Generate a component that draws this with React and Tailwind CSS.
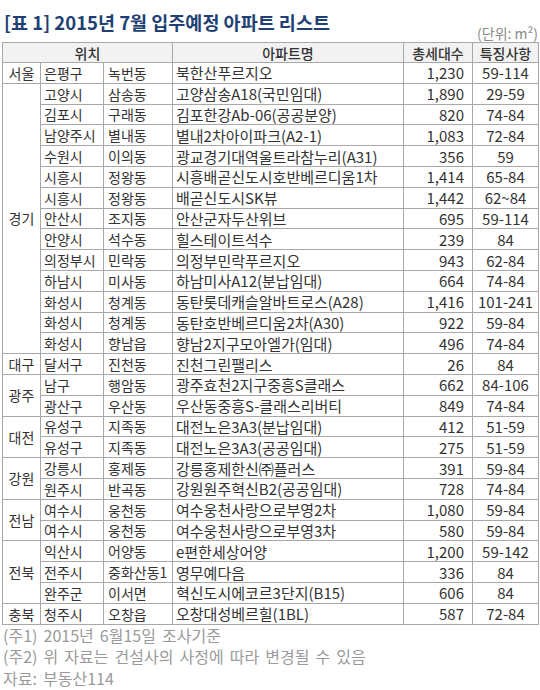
const groups = [
  { region: "서울", rows: [["은평구", "녹번동", "북한산푸르지오", "1,230", "59-114"]] },
  {
    region: "경기",
    rows: [
      ["고양시", "삼송동", "고양삼송A18(국민임대)", "1,890", "29-59"],
      ["김포시", "구래동", "김포한강Ab-06(공공분양)", "820", "74-84"],
      ["남양주시", "별내동", "별내2차아이파크(A2-1)", "1,083", "72-84"],
      ["수원시", "이의동", "광교경기대역울트라참누리(A31)", "356", "59"],
      ["시흥시", "정왕동", "시흥배곧신도시호반베르디움1차", "1,414", "65-84"],
      ["시흥시", "정왕동", "배곧신도시SK뷰", "1,442", "62~84"],
      ["안산시", "조지동", "안산군자두산위브", "695", "59-114"],
      ["안양시", "석수동", "힐스테이트석수", "239", "84"],
      ["의정부시", "민락동", "의정부민락푸르지오", "943", "62-84"],
      ["하남시", "미사동", "하남미사A12(분납임대)", "664", "74-84"],
      ["화성시", "청계동", "동탄롯데캐슬알바트로스(A28)", "1,416", "101-241"],
      ["화성시", "청계동", "동탄호반베르디움2차(A30)", "922", "59-84"],
      ["화성시", "향남읍", "향남2지구모아엘가(임대)", "496", "74-84"],
    ],
  },
  { region: "대구", rows: [["달서구", "진천동", "진천그린팰리스", "26", "84"]] },
  {
    region: "광주",
    rows: [
      ["남구", "행암동", "광주효천2지구중흥S클래스", "662", "84-106"],
      ["광산구", "우산동", "우산동중흥S-클래스리버티", "849", "74-84"],
    ],
  },
  {
    region: "대전",
    rows: [
      ["유성구", "지족동", "대전노은3A3(분납임대)", "412", "51-59"],
      ["유성구", "지족동", "대전노은3A3(공공임대)", "275", "51-59"],
    ],
  },
  {
    region: "강원",
    rows: [
      ["강릉시", "홍제동", "강릉홍제한신㈜플러스", "391", "59-84"],
      ["원주시", "반곡동", "강원원주혁신B2(공공임대)", "728", "74-84"],
    ],
  },
  {
    region: "전남",
    rows: [
      ["여수시", "웅천동", "여수웅천사랑으로부영2차", "1,080", "59-84"],
      ["여수시", "웅천동", "여수웅천사랑으로부영3차", "580", "59-84"],
    ],
  },
  {
    region: "전북",
    rows: [
      ["익산시", "어양동", "e편한세상어양", "1,200", "59-142"],
      ["전주시", "중화산동1", "영무예다음", "336", "84"],
      ["완주군", "이서면", "혁신도시에코르3단지(B15)", "606", "84"],
    ],
  },
  { region: "충북", rows: [["청주시", "오창읍", "오창대성베르힐(1BL)", "587", "72-84"]] },
];

const cell = "border border-[#a8a8a8] leading-none whitespace-nowrap overflow-hidden p-0";

export default function App() {
  return (
    <div className="w-[540px] h-[690px] bg-white text-[#333] font-['Noto_Sans_CJK_KR',sans-serif]">
      <div className="h-[42px] flex justify-between pl-[4px] pr-[2px]">
        <h1 className="mt-[12px] text-[18.5px] leading-[20px] font-bold text-[#213f73]">
          [표 1] 2015년 7월 입주예정 아파트 리스트
        </h1>
        <span className="self-end mb-[1px] text-[14px] leading-[16px] text-[#8a8a8a]">
          (단위: m²)
        </span>
      </div>

      <table className="ml-[2px] w-[536px] table-fixed border-collapse text-[14px]">
        <colgroup>
          <col className="w-[38px]" />
          <col className="w-[63px]" />
          <col className="w-[69px]" />
          <col className="w-[231px]" />
          <col className="w-[69px]" />
          <col className="w-[66px]" />
        </colgroup>
        <thead>
          <tr className="h-[20px] bg-[#f2f2f2]">
            <th colSpan={3} className={`${cell} font-medium text-center`}>위치</th>
            <th className={`${cell} font-medium text-center`}>아파트명</th>
            <th className={`${cell} font-medium text-center`}>총세대수</th>
            <th className={`${cell} font-medium text-center`}>특징사항</th>
          </tr>
        </thead>
        <tbody>
          {groups.map((g) =>
            g.rows.map((r, i) => (
              <tr key={g.region + i} className="h-[20.8px]">
                {i === 0 && (
                  <td rowSpan={g.rows.length} className={`${cell} text-center`}>
                    {g.region}
                  </td>
                )}
                <td className={`${cell} pl-[3px]`}>{r[0]}</td>
                <td className={`${cell} pl-[4px]`}>{r[1]}</td>
                <td className={`${cell} pl-[3px] text-[15px]`}>{r[2]}</td>
                <td className={`${cell} text-right pr-[8px] text-[15px]`}>{r[3]}</td>
                <td className={`${cell} text-center text-[15px]`}>{r[4]}</td>
              </tr>
            ))
          )}
        </tbody>
      </table>

      <div className="pl-[3px] text-[16px] leading-[21.5px] text-[#9a9a9a] [word-spacing:2.5px]">
        <p>(주1) 2015년 6월15일 조사기준</p>
        <p>(주2) 위 자료는 건설사의 사정에 따라 변경될 수 있음</p>
        <p>자료: 부동산114</p>
      </div>
    </div>
  );
}
